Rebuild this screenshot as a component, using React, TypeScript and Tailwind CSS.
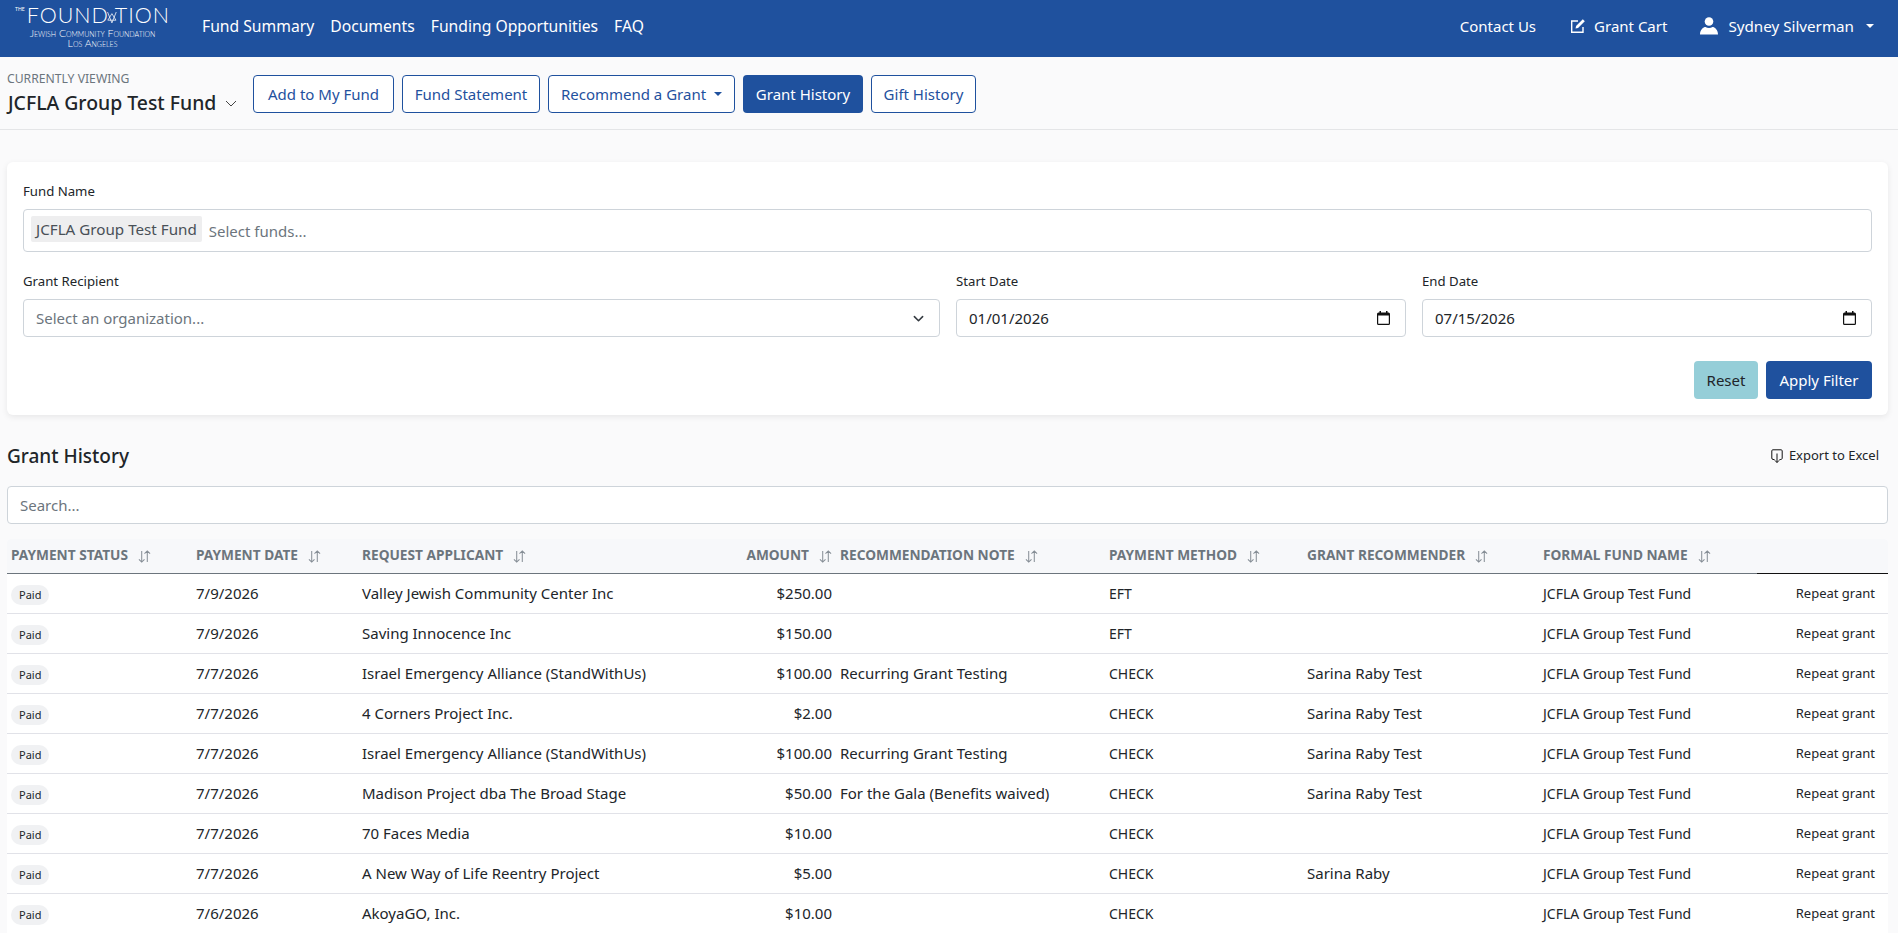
const NAV = ["Fund Summary", "Documents", "Funding Opportunities", "FAQ"];

const HEADERS = [
  { label: "PAYMENT STATUS", w: "w-[185px]" },
  { label: "PAYMENT DATE", w: "w-[166px]" },
  { label: "REQUEST APPLICANT", w: "w-[378px]" },
  { label: "AMOUNT", w: "w-[100px]", right: true },
  { label: "RECOMMENDATION NOTE", w: "w-[269px]" },
  { label: "PAYMENT METHOD", w: "w-[198px]" },
  { label: "GRANT RECOMMENDER", w: "w-[236px]" },
  { label: "FORMAL FUND NAME", w: "w-[218px]" },
];

const ROWS = [
  ["7/9/2026", "Valley Jewish Community Center Inc", "$250.00", "", "EFT", ""],
  ["7/9/2026", "Saving Innocence Inc", "$150.00", "", "EFT", ""],
  ["7/7/2026", "Israel Emergency Alliance (StandWithUs)", "$100.00", "Recurring Grant Testing", "CHECK", "Sarina Raby Test"],
  ["7/7/2026", "4 Corners Project Inc.", "$2.00", "", "CHECK", "Sarina Raby Test"],
  ["7/7/2026", "Israel Emergency Alliance (StandWithUs)", "$100.00", "Recurring Grant Testing", "CHECK", "Sarina Raby Test"],
  ["7/7/2026", "Madison Project dba The Broad Stage", "$50.00", "For the Gala (Benefits waived)", "CHECK", "Sarina Raby Test"],
  ["7/7/2026", "70 Faces Media", "$10.00", "", "CHECK", ""],
  ["7/7/2026", "A New Way of Life Reentry Project", "$5.00", "", "CHECK", "Sarina Raby"],
  ["7/6/2026", "AkoyaGO, Inc.", "$10.00", "", "CHECK", ""],
];

function SortIcon() {
  return (
    <svg viewBox="0 0 14 14" className="ml-[10px] size-[13px] shrink-0 translate-y-[2px] text-[#868e96]" fill="none" stroke="currentColor" strokeWidth="1.1">
      <path d="M4 1v12M1 10l3 3 3-3M10 13V1M7 4l3-3 3 3" />
    </svg>
  );
}

function CalendarIcon() {
  return (
    <svg viewBox="0 0 13 14" className="h-[14px] w-[13px]" fill="#111">
      <path d="M2.500 0h1.500v1.500h5V0h1.500v1.500h1A1.500 1.500 0 0 1 13 3v9.500A1.500 1.500 0 0 1 11.500 14h-10A1.500 1.500 0 0 1 0 12.500V3a1.500 1.500 0 0 1 1.500-1.500h1zM1.200 4.600v7.900c0 .2.100.3.300.3h10c.2 0 .3-.1.3-.3V4.600z" />
    </svg>
  );
}

function Logo() {
  return (
    <div className="flex h-[57px] w-[155px] flex-col items-center font-['Lato',sans-serif] text-white">
      <div className="mt-[3px] flex h-[24px] w-[155px] items-start text-[21.5px] font-light leading-[24px] tracking-[1px]">
        <span className="mt-[4px] mr-[2px] text-[5px] font-normal leading-none tracking-normal">THE</span>
        <span>FOUND</span>
        <svg viewBox="0 0 18 24" className="mx-[-2px] mt-[3px] h-[24px] w-[18px]" fill="none" stroke="currentColor" strokeWidth="1.4">
          <path d="M9 4L1.500 16h15zM1 1l8 20 8-20" />
        </svg>
        <span>TION</span>
      </div>
      <span className="mt-[1px] whitespace-nowrap text-[10.5px] font-light leading-[10px] [font-variant-caps:small-caps]">Jewish Community Foundation</span>
      <span className="mt-[-1px] whitespace-nowrap text-[10.5px] font-light leading-[12px] [font-variant-caps:small-caps]">Los Angeles</span>
    </div>
  );
}

function Field({ label, className, children }: { label: string; className?: string; children: React.ReactNode }) {
  return (
    <div className={className}>
      <label className="mb-[8px] block text-[13.2px] leading-[19px] text-[#212529]">{label}</label>
      {children}
    </div>
  );
}

function DateInput({ value }: { value: string }) {
  return (
    <div className="flex h-[38px] items-center justify-between rounded-[4px] border border-[#ced4da] bg-white pr-[15px] pl-[12px] text-[15px] text-[#212529]">
      <span>{value}</span>
      <CalendarIcon />
    </div>
  );
}

function OutlineButton({ children, caret, width }: { children: React.ReactNode; caret?: boolean; width: string }) {
  return (
    <button type="button" className={`flex h-[38px] items-center justify-center rounded-[4px] border border-[#1f519e] bg-white text-[15px] text-[#1f519e] ${width}`}>
      {children}
      {caret ? <span className="ml-[8px] h-0 w-0 border-x-[4px] border-t-[4px] border-x-transparent border-t-[#1f519e]" /> : null}
    </button>
  );
}

export default function App() {
  return (
    <div className="h-[933px] overflow-hidden bg-[#fafafb] font-['Noto_Sans',sans-serif] text-[#212529]">
      <header className="flex h-[57px] items-center justify-between bg-[#1f519e] pr-[24px] text-white">
        <div className="flex items-center">
          <div className="ml-[15px] mr-[32px]">
            <Logo />
          </div>
          <nav className="flex gap-[16px] pb-[4px] text-[15.7px]">
            {NAV.map((item) => (
              <a key={item}>{item}</a>
            ))}
          </nav>
        </div>
        <div className="flex items-center pb-[4px] text-[15px]">
          <a className="mr-[34px]">Contact Us</a>
          <svg viewBox="0 0 16 16" className="mr-[8px] size-[16px]" fill="none" stroke="currentColor" strokeWidth="1.4">
            <path d="M13 9v5.300H1.700V3H8" />
            <path d="M5.500 10.500l.6-2.600L12.800 1.200l2 2-6.700 6.700z" fill="currentColor" stroke="none" />
          </svg>
          <a className="mr-[32px]">Grant Cart</a>
          <svg viewBox="0 0 20 20" className="mr-[9px] size-[20px]" fill="currentColor">
            <circle cx="10" cy="5.500" r="4.300" />
            <path d="M1 18.500c0-5 3.500-7.500 5.500-7.500 1 .6 2.200 1 3.500 1s2.500-.4 3.500-1c2 0 5.500 2.500 5.500 7.500z" />
          </svg>
          <a className="text-[15.2px]">Sydney Silverman</a>
          <span className="ml-[12px] h-0 w-0 border-x-[4px] border-t-[4px] border-x-transparent border-t-white" />
        </div>
      </header>

      <div className="flex h-[73px] items-center border-b border-[#e4e5e7] pt-[2px] pl-[7px]">
        <div className="w-[246px]">
          <div className="text-[12.2px] leading-[14px] text-[#6c757d]">CURRENTLY VIEWING</div>
          <div className="mt-[4px] flex items-center pl-[1px] text-[19.4px] font-medium leading-[26px] text-[#212529]">
            JCFLA Group Test Fund
            <svg viewBox="0 0 12 12" className="ml-[9px] size-[12px]" fill="none" stroke="#444" strokeWidth="1">
              <path d="M1 4l5 5 5-5" />
            </svg>
          </div>
        </div>
        <div className="flex gap-[8px]">
          <OutlineButton width="w-[141px]">Add to My Fund</OutlineButton>
          <OutlineButton width="w-[138px]">Fund Statement</OutlineButton>
          <OutlineButton width="w-[187px]" caret>Recommend a Grant</OutlineButton>
          <button type="button" className="flex h-[38px] w-[120px] items-center justify-center rounded-[4px] bg-[#1f519e] text-[15px] text-white">Grant History</button>
          <OutlineButton width="w-[105px]">Gift History</OutlineButton>
        </div>
      </div>

      <section className="mr-[10px] ml-[7px] mt-[32px] h-[253px] rounded-[6px] bg-white px-[16px] pt-[20px] shadow-[0_2px_6px_rgba(0,0,0,0.08)]">
        <Field label="Fund Name">
          <div className="flex h-[43px] items-start rounded-[4px] border border-[#ced4da] pt-[6px] pl-[7px]">
            <span className="rounded-[2px] bg-[#eeeeef] px-[5px] text-[15.2px] leading-[26px] text-[#495057]">JCFLA Group Test Fund</span>
            <span className="mt-[2px] ml-[7px] text-[15px] leading-[26px] text-[#6c757d]">Select funds...</span>
          </div>
        </Field>
        <div className="mt-[20px] flex gap-[16px]">
          <Field label="Grant Recipient" className="w-[917px]">
            <div className="flex h-[38px] items-center justify-between rounded-[4px] border border-[#ced4da] pr-[15px] pl-[12px] text-[15px] text-[#6c757d]">
              Select an organization...
              <svg viewBox="0 0 12 12" className="size-[11px]" fill="none" stroke="#343a40" strokeWidth="1.7" strokeLinecap="round" strokeLinejoin="round">
                <path d="M1.500 4l4.500 4.500L10.500 4" />
              </svg>
            </div>
          </Field>
          <Field label="Start Date" className="w-[450px]"><DateInput value="01/01/2026" /></Field>
          <Field label="End Date" className="w-[450px]"><DateInput value="07/15/2026" /></Field>
        </div>
        <div className="mt-[24px] flex justify-end gap-[8px]">
          <button type="button" className="h-[38px] w-[64px] rounded-[4px] bg-[#95ced8] text-[15px] text-[#212529]">Reset</button>
          <button type="button" className="h-[38px] w-[106px] rounded-[4px] bg-[#1f519e] text-[15px] text-white">Apply Filter</button>
        </div>
      </section>

      <div className="mr-[10px] ml-[7px] mt-[29px] flex items-center justify-between">
        <h2 className="text-[19px] font-medium leading-[24px]">Grant History</h2>
        <div className="mr-[9px] flex items-center gap-[6px] text-[13px]">
          <svg viewBox="0 0 12 14" className="h-[14px] w-[12px]" fill="none" stroke="#111" strokeWidth="1">
            <path d="M3.500 10.500H2A1.500 1.500 0 0 1 .8 9V1.800c0-.5.4-1 1-1h8.400c.5 0 1 .5 1 1V9c0 .8-.6 1.500-1.300 1.500H8.500" />
            <path d="M6 4.500v9M3.800 11.300L6 13.500l2.200-2.200" />
          </svg>
          Export to Excel
        </div>
      </div>

      <div className="mr-[10px] ml-[7px] mt-[18px] flex h-[38px] items-center rounded-[4px] border border-[#ced4da] bg-white px-[12px] text-[15px] text-[#6c757d]">Search...</div>

      <div className="mr-[10px] ml-[7px] mt-[15px] rounded-t-[4px] bg-white">
        <div className="flex h-[34px] items-center rounded-t-[4px] bg-[#f7f8fa] pb-[2px]">
          {HEADERS.map((h) => (
            <div key={h.label} className={`${h.w} flex shrink-0 items-center pl-[4px] text-[13.7px] font-bold text-[#6c757d] ${h.right ? "justify-end pr-[4px]" : ""}`}>
              {h.label}
              <SortIcon />
            </div>
          ))}
        </div>
        <div className="flex h-px">
          <div className="w-[1750px] bg-[#6c757d]" />
          <div className="flex-1 bg-[#111]" />
        </div>
        {ROWS.map((r, i) => (
          <div key={i} className="flex h-[40px] items-center border-b border-[#e1e2e8] pb-[1px] text-[15px]">
            <div className="w-[185px] shrink-0 pl-[4px]">
              <span className="inline-block h-[20px] rounded-full bg-[#f0f1f3] px-[8px] text-[11px] leading-[20px]">Paid</span>
            </div>
            <div className="w-[166px] shrink-0 pl-[4px]">{r[0]}</div>
            <div className="w-[378px] shrink-0 pl-[4px]">{r[1]}</div>
            <div className="w-[100px] shrink-0 pr-[4px] text-right">{r[2]}</div>
            <div className="w-[269px] shrink-0 pl-[4px]">{r[3]}</div>
            <div className="w-[198px] shrink-0 pl-[4px] text-[14px]">{r[4]}</div>
            <div className="w-[236px] shrink-0 pl-[4px]">{r[5]}</div>
            <div className="w-[218px] shrink-0 pl-[4px] text-[14px]">JCFLA Group Test Fund</div>
            <div className="flex-1 pt-[2px] pr-[13px] text-right text-[13px]">Repeat grant</div>
          </div>
        ))}
      </div>
    </div>
  );
}
